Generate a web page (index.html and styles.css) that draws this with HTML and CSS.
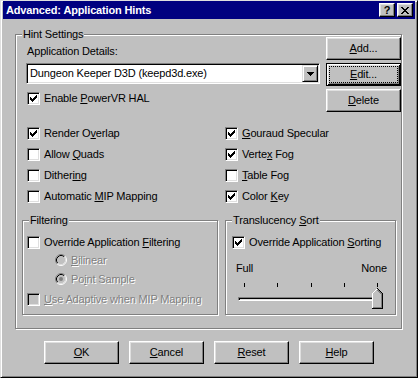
FILE: index.html
```html
<!DOCTYPE html>
<html lang="en">

<head>
    <meta charset="UTF-8">
    <meta name="viewport" content="width=device-width, initial-scale=1.0">
    <title>Advanced: Application Hints</title>
    <link rel="stylesheet" href="styles.css">
</head>

<body>
    <div class="window">
        <div class="title-bar">
            <span class="title-text">Advanced: Application Hints</span>
            <div class="title-buttons">
                <button class="title-btn">?</button>
                <button class="title-btn">
                    <svg width="8" height="7" viewBox="0 0 8 7">
                        <path d="M0 0h2v1H0z M6 0h2v1H6z M1 1h2v1H1z M5 1h2v1H5z M2 2h4v1H2z M3 3h2v1H3z M2 4h4v1H2z M1 5h2v1H1z M5 5h2v1H5z M0 6h2v1H0z M6 6h2v1H6z" fill="#000" />
                    </svg>
                </button>
            </div>
        </div>

        <div class="group hint-group">
            <div class="group-title">Hint Settings</div>

            <div class="top-row">
                <div class="details">
                    <div class="field-label">Application Details:</div>
                    <div class="combo">
                        <span class="combo-text">Dungeon Keeper D3D (keepd3d.exe)</span>
                        <span class="combo-btn">
                            <svg width="7" height="4" viewBox="0 0 7 4">
                                <path d="M0 0h7v1H0z M1 1h5v1H1z M2 2h3v1H2z M3 3h1v1H3z" fill="#000" />
                            </svg>
                        </span>
                    </div>
                    <div class="check enable-row">
                        <span class="box"><svg class="tick-mark" width="11" height="11" viewBox="1 1 11 11"><path d="M9 3h1v1H9z M8 4h2v1H8z M3 5h1v1H3z M7 5h3v1H7z M3 6h2v1H3z M6 6h3v1H6z M3 7h5v1H3z M4 8h3v1H4z M5 9h1v1H5z" /></svg></span>
                        <span>Enable <u>P</u>owerVR HAL</span>
                    </div>
                </div>
                <div class="side-buttons">
                    <button class="btn"><span><u>A</u>dd...</span></button>
                    <button class="btn btn-default"><span class="focus"><u>E</u>dit...</span></button>
                    <button class="btn"><span><u>D</u>elete</span></button>
                </div>
            </div>

            <div class="options">
                <div class="check">
                    <span class="box"><svg class="tick-mark" width="11" height="11" viewBox="1 1 11 11"><path d="M9 3h1v1H9z M8 4h2v1H8z M3 5h1v1H3z M7 5h3v1H7z M3 6h2v1H3z M6 6h3v1H6z M3 7h5v1H3z M4 8h3v1H4z M5 9h1v1H5z" /></svg></span>
                    <span>Render O<u>v</u>erlap</span>
                </div>
                <div class="check">
                    <span class="box"></span>
                    <span>Allow <u>Q</u>uads</span>
                </div>
                <div class="check">
                    <span class="box"></span>
                    <span>Dither<u>in</u>g</span>
                </div>
                <div class="check">
                    <span class="box"></span>
                    <span>Automatic <u>M</u>IP Mapping</span>
                </div>
                <div class="check">
                    <span class="box"><svg class="tick-mark" width="11" height="11" viewBox="1 1 11 11"><path d="M9 3h1v1H9z M8 4h2v1H8z M3 5h1v1H3z M7 5h3v1H7z M3 6h2v1H3z M6 6h3v1H6z M3 7h5v1H3z M4 8h3v1H4z M5 9h1v1H5z" /></svg></span>
                    <span><u>G</u>ouraud Specular</span>
                </div>
                <div class="check">
                    <span class="box"><svg class="tick-mark" width="11" height="11" viewBox="1 1 11 11"><path d="M9 3h1v1H9z M8 4h2v1H8z M3 5h1v1H3z M7 5h3v1H7z M3 6h2v1H3z M6 6h3v1H6z M3 7h5v1H3z M4 8h3v1H4z M5 9h1v1H5z" /></svg></span>
                    <span>Verte<u>x</u> Fog</span>
                </div>
                <div class="check">
                    <span class="box"></span>
                    <span><u>T</u>able Fog</span>
                </div>
                <div class="check">
                    <span class="box"><svg class="tick-mark" width="11" height="11" viewBox="1 1 11 11"><path d="M9 3h1v1H9z M8 4h2v1H8z M3 5h1v1H3z M7 5h3v1H7z M3 6h2v1H3z M6 6h3v1H6z M3 7h5v1H3z M4 8h3v1H4z M5 9h1v1H5z" /></svg></span>
                    <span>Color <u>K</u>ey</span>
                </div>
            </div>

            <div class="lower">
                <div class="group filter-group">
                    <div class="group-title">Filtering</div>
                    <div class="check filter-check">
                        <span class="box"></span>
                        <span>Override Application <u>F</u>iltering</span>
                    </div>
                    <div class="radio bilinear disabled">
                        <svg width="12" height="12" viewBox="0 0 12 12">
                            <circle cx="6" cy="6" r="4" fill="#c0c0c0" />
                            <path d="M2.11 9.89A5.5 5.5 0 0 1 9.89 2.11" stroke="#808080" fill="none" />
                            <path d="M9.89 2.11A5.5 5.5 0 0 1 2.11 9.89" stroke="#fff" fill="none" />
                            <path d="M2.82 9.18A4.5 4.5 0 0 1 9.18 2.82" stroke="#000" fill="none" />
                            <path d="M9.18 2.82A4.5 4.5 0 0 1 2.82 9.18" stroke="#dfdfdf" fill="none" />
                        </svg>
                        <span><u>B</u>ilinear</span>
                    </div>
                    <div class="radio point disabled">
                        <svg width="12" height="12" viewBox="0 0 12 12">
                            <circle cx="6" cy="6" r="4" fill="#c0c0c0" />
                            <path d="M2.11 9.89A5.5 5.5 0 0 1 9.89 2.11" stroke="#808080" fill="none" />
                            <path d="M9.89 2.11A5.5 5.5 0 0 1 2.11 9.89" stroke="#fff" fill="none" />
                            <path d="M2.82 9.18A4.5 4.5 0 0 1 9.18 2.82" stroke="#000" fill="none" />
                            <path d="M9.18 2.82A4.5 4.5 0 0 1 2.82 9.18" stroke="#dfdfdf" fill="none" />
                            <circle cx="6" cy="6" r="2" fill="#808080" />
                        </svg>
                        <span>Po<u>i</u>nt Sample</span>
                    </div>
                    <div class="check adaptive-check disabled">
                        <span class="box box-disabled"></span>
                        <span><u>U</u>se Adaptive when MIP Mapping</span>
                    </div>
                </div>

                <div class="group sort-group">
                    <div class="group-title">Translucency <u>S</u>ort</div>
                    <div class="check sort-check">
                        <span class="box"><svg class="tick-mark" width="11" height="11" viewBox="1 1 11 11"><path d="M9 3h1v1H9z M8 4h2v1H8z M3 5h1v1H3z M7 5h3v1H7z M3 6h2v1H3z M6 6h3v1H6z M3 7h5v1H3z M4 8h3v1H4z M5 9h1v1H5z" /></svg></span>
                        <span>Override Application <u>S</u>orting</span>
                    </div>
                    <div class="scale-labels">
                        <span>Full</span>
                        <span>None</span>
                    </div>
                    <div class="slider">
                        <div class="ticks">
                            <span class="tick"></span>
                            <span class="tick"></span>
                            <span class="tick"></span>
                            <span class="tick"></span>
                            <span class="tick"></span>
                        </div>
                        <div class="track"></div>
                        <svg class="thumb" width="11" height="21" viewBox="0 0 11 21" shape-rendering="crispEdges">
                            <polygon points="0.5,5.5 5.5,0.5 10.5,5.5 10.5,20.5 0.5,20.5" fill="#c0c0c0" />
                            <path d="M0.5 20V5.5L5.5 0.5" stroke="#fff" fill="none" />
                            <path d="M5.5 0.5L10.5 5.5V20.5H0" stroke="#000" fill="none" />
                            <path d="M5.5 2L9.5 6V19.5H1" stroke="#808080" fill="none" />
                        </svg>
                    </div>
                </div>
            </div>
        </div>

        <div class="dialog-buttons">
            <button class="btn"><span><u>O</u>K</span></button>
            <button class="btn"><span><u>C</u>ancel</span></button>
            <button class="btn"><span><u>R</u>eset</span></button>
            <button class="btn"><span><u>H</u>elp</span></button>
        </div>
    </div>
</body>

</html>
```

FILE: styles.css
```css
body {
    margin: 0;
    font-family: "Liberation Sans", Arial, sans-serif;
    font-size: 11px;
    letter-spacing: -0.15px;
    color: #000;
    background-color: #c0c0c0;
}

u {
    text-underline-offset: 1px;
}

.window {
    width: 418px;
    height: 378px;
    box-sizing: border-box;
    background-color: #c0c0c0;
    border: 1px solid;
    border-color: #dfdfdf #000 #000 #dfdfdf;
    box-shadow: inset 1px 1px #fff, inset -1px -1px #808080;
    padding: 0 2px 2px;
}

/* Title bar */
.title-bar {
    height: 18px;
    background-color: #000080;
    color: #fff;
    display: flex;
    align-items: center;
    justify-content: space-between;
    padding: 0 2px 0 3px;
}

.title-text {
    font-weight: bold;
    line-height: 13px;
}

.title-buttons {
    display: flex;
    gap: 2px;
}

.title-btn {
    width: 16px;
    height: 14px;
    box-sizing: border-box;
    margin: 0;
    padding: 0;
    border: 1px solid;
    border-color: #fff #000 #000 #fff;
    box-shadow: inset -1px -1px #808080, inset 1px 1px #dfdfdf;
    background-color: #c0c0c0;
    color: #000;
    font: bold 11px "Liberation Sans", Arial, sans-serif;
    line-height: 11px;
    display: flex;
    align-items: center;
    justify-content: center;
}

/* Group boxes */
.group {
    box-sizing: border-box;
    border: 1px solid #808080;
    box-shadow: inset 1px 1px #fff, 1px 1px #fff;
}

.group-title {
    display: table;
    margin: -7px 0 -6px 6px;
    padding: 0 1px;
    background-color: #c0c0c0;
    line-height: 13px;
}

.hint-group {
    width: 387px;
    height: 295px;
    margin: 15px 0 0 12px;
}

.top-row {
    display: flex;
    justify-content: space-between;
    margin-left: 10px;
}

.details {
    display: flex;
    flex-direction: column;
    align-items: flex-start;
}

.field-label {
    margin: 10px 0 0 1px;
    line-height: 13px;
}

/* Combo box */
.combo {
    width: 294px;
    height: 21px;
    margin-top: 5px;
    box-sizing: border-box;
    display: flex;
    align-items: center;
    padding: 1px;
    border: 1px solid;
    border-color: #808080 #fff #fff #808080;
    box-shadow: inset 1px 1px #000, inset -1px -1px #dfdfdf;
    background-color: #fff;
}

.combo-text {
    flex: 1;
    padding-left: 2px;
    line-height: 13px;
}

.combo-btn {
    width: 16px;
    height: 17px;
    box-sizing: border-box;
    border: 1px solid;
    border-color: #dfdfdf #000 #000 #dfdfdf;
    box-shadow: inset 1px 1px #fff, inset -1px -1px #808080;
    background-color: #c0c0c0;
    display: flex;
    align-items: center;
    justify-content: center;
}

.combo-btn svg {
    display: block;
}

/* Checkboxes */
.check {
    display: flex;
    align-items: center;
    gap: 4px;
    height: 13px;
    line-height: 13px;
    white-space: nowrap;
}

.box {
    flex: none;
    width: 13px;
    height: 13px;
    box-sizing: border-box;
    border: 1px solid;
    border-color: #808080 #fff #fff #808080;
    box-shadow: inset 1px 1px #000, inset -1px -1px #dfdfdf;
    background-color: #fff;
}

.box svg {
    display: block;
}

.tick-mark {
    fill: #000;
}

.box-disabled {
    background-color: #c0c0c0;
}

.enable-row {
    margin: 8px 0 0 1px;
}

.options {
    display: grid;
    grid-template-columns: 198px 1fr;
    grid-template-rows: repeat(4, 13px);
    grid-auto-flow: column;
    row-gap: 8px;
    margin: 15px 0 0 11px;
}

/* Buttons */
.side-buttons {
    display: flex;
    flex-direction: column;
    gap: 3px;
    padding-top: 2px;
}

.btn {
    width: 75px;
    height: 23px;
    box-sizing: border-box;
    margin: 0;
    padding: 0;
    border: 1px solid;
    border-color: #fff #000 #000 #fff;
    box-shadow: inset -1px -1px #808080, inset 1px 1px #dfdfdf;
    background-color: #c0c0c0;
    color: #000;
    font: 11px "Liberation Sans", Arial, sans-serif;
    letter-spacing: -0.15px;
    line-height: 13px;
    display: flex;
    align-items: center;
    justify-content: center;
}

.btn-default {
    border-color: #000;
    box-shadow: inset 1px 1px #fff, inset -1px -1px #000, inset 2px 2px #dfdfdf, inset -2px -2px #808080;
}

.focus {
    align-self: stretch;
    flex: 1;
    margin: 2px;
    border: 1px dotted #000;
    display: flex;
    align-items: center;
    justify-content: center;
}

/* Lower groups */
.lower {
    display: flex;
    gap: 7px;
    margin: 17px 0 0 6px;
}

.filter-group {
    width: 196px;
    height: 95px;
}

.sort-group {
    width: 171px;
    height: 95px;
}

.filter-check {
    margin: 15px 0 0 4px;
}

.radio {
    display: flex;
    align-items: flex-start;
    gap: 4px;
    height: 13px;
    line-height: 13px;
    margin-left: 32px;
}

.radio svg {
    display: block;
    flex: none;
}

.bilinear {
    margin-top: 5px;
}

.point {
    margin-top: 6px;
}

.adaptive-check {
    margin: 7px 0 0 4px;
}

.disabled {
    color: #808080;
    text-shadow: 1px 1px #fff;
}

.sort-check {
    margin: 15px 0 0 6px;
}

.scale-labels {
    display: flex;
    justify-content: space-between;
    width: 151px;
    margin: 13px 0 0 10px;
    line-height: 13px;
}

/* Slider */
.slider {
    position: relative;
    width: 145px;
    margin: 8px 0 0 12px;
}

.ticks {
    display: flex;
    justify-content: space-between;
    padding: 0 5px 0 6px;
    height: 4px;
}

.tick {
    width: 1px;
    height: 4px;
    background-color: #000;
}

.track {
    margin-top: 10px;
    height: 4px;
    box-sizing: border-box;
    border: 1px solid;
    border-color: #808080 #fff #fff #808080;
    box-shadow: inset 1px 1px #000, inset -1px -1px #dfdfdf;
}

.thumb {
    position: absolute;
    right: 0;
    top: 5px;
    display: block;
}

/* Dialog buttons */
.dialog-buttons {
    display: flex;
    gap: 10px;
    margin: 12px 0 0 41px;
}
```
